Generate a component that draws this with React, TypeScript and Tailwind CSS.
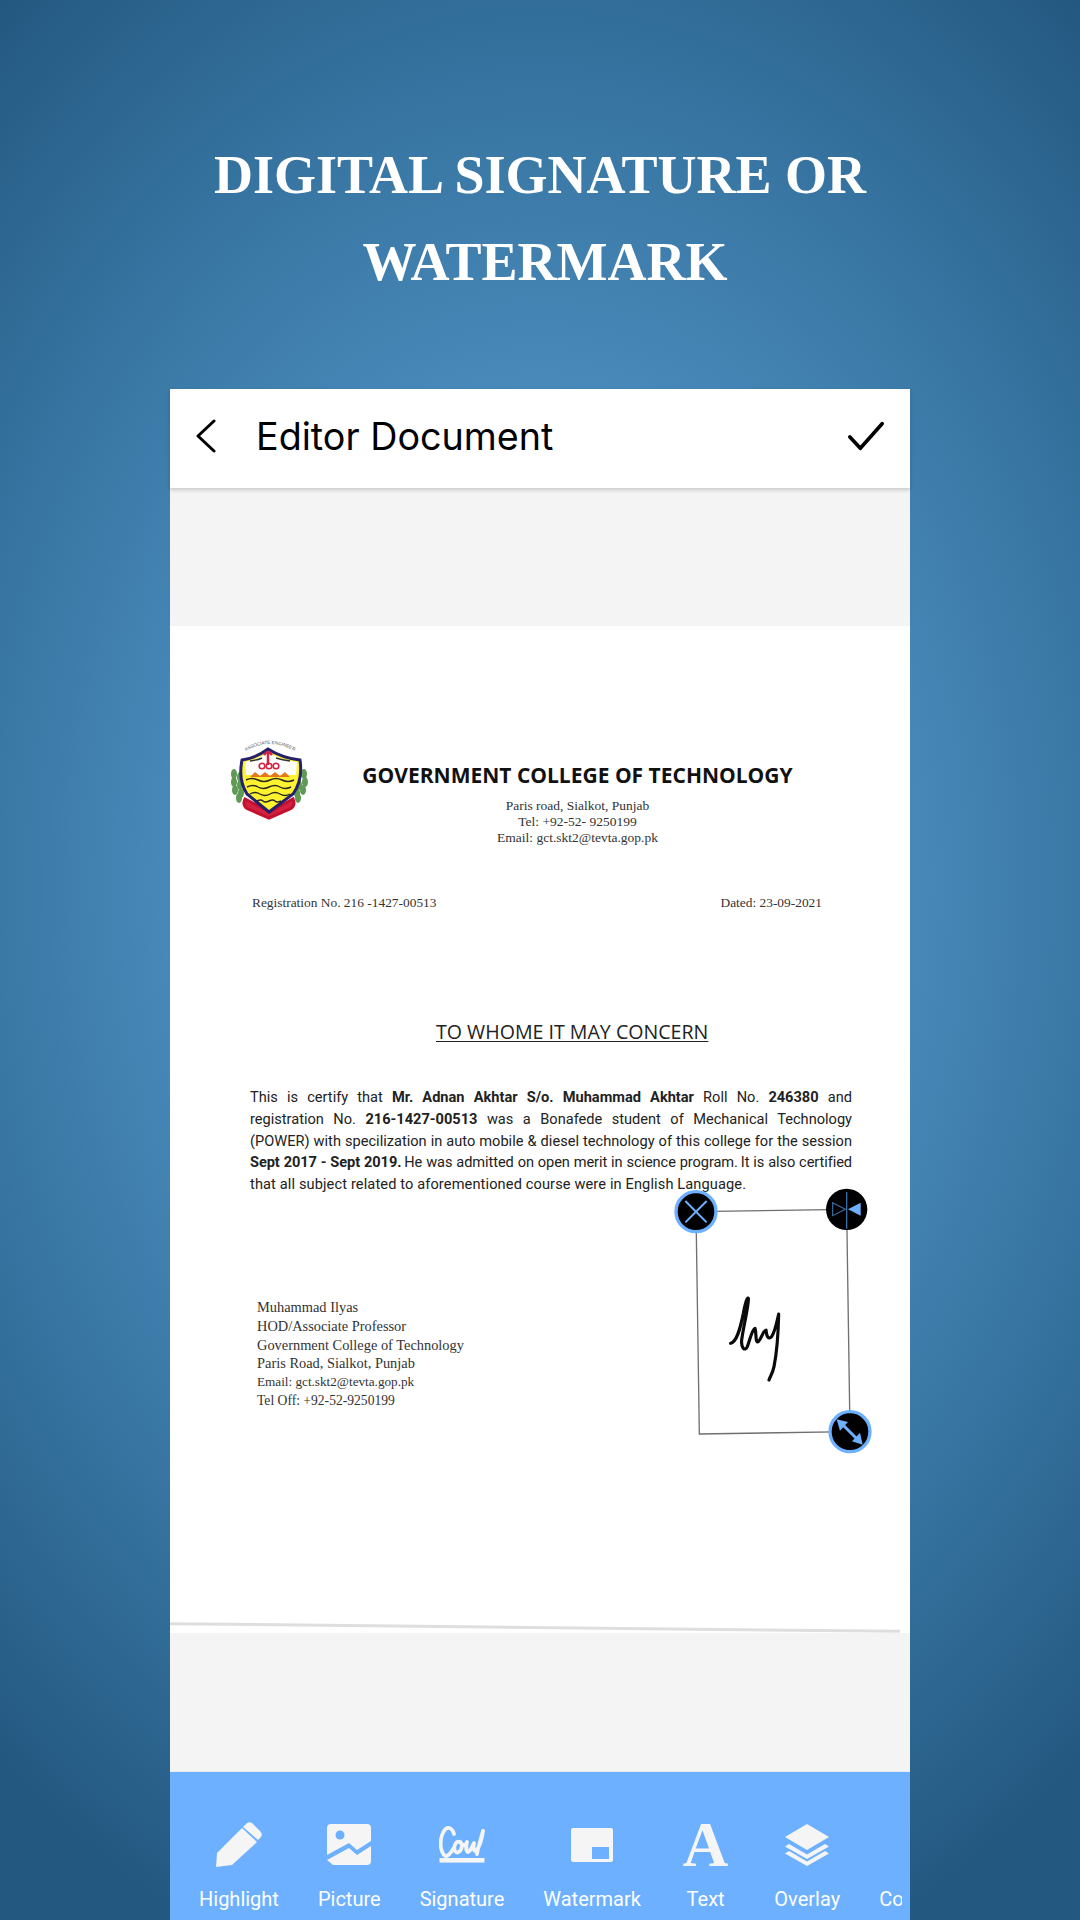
import React from 'react';

const serif = "font-['Liberation_Serif',serif]";
const roboto = "font-['Roboto',sans-serif]";

const PencilIcon = () => (
  <svg width="46" height="46" viewBox="0 0 46 46" fill="#f5f5f5">
    <path d="M0 45 L1 31 L26 6 L41 20 L16 43 Z" />
    <path d="M29 3 Q32 -1 36 1 L44 9 Q47 12 45 15 L42 18 L27 5 Z" />
  </svg>
);

const PictureIcon = () => (
  <svg width="46" height="42" viewBox="0 0 46 42" fill="#f5f5f5">
    <path d="M5 0 H41 Q45 0 45 4 V17 L31 26 L23 19 L1 31 V4 Q1 0 5 0 Z" />
    <path d="M1 36 L23 24 L31 31 L45 22 V37 Q45 41 41 41 H7 Z" />
    <circle cx="14" cy="11" r="4.5" fill="#6cb0ff" />
  </svg>
);

const SignatureIcon = () => (
  <svg width="46" height="40" viewBox="0 0 46 40" fill="none" stroke="#f5f5f5" strokeWidth="3.8" strokeLinecap="round" strokeLinejoin="round">
    <path d="M15 9 C13 2 8 1 5 6 C1 12 0 24 5 30 C8 33 12 28 14 24" />
    <path d="M21 17 C17 15 14 22 16 26 C18 29 22 27 23 21 C23 19 22 17 21 17 C24 21 26 21 28 17 C27 21 27 26 29 27 C32 26 33 21 35 18 C34 23 35 27 37 26 C41 22 43 13 44 6 C42 14 39 22 38 29" />
    <rect x="0.5" y="33" width="45" height="4.6" fill="#f5f5f5" stroke="none" />
  </svg>
);

const WatermarkIcon = () => (
  <svg width="42" height="34" viewBox="0 0 42 34" fill="#f5f5f5">
    <path fillRule="evenodd" d="M2 0 H40 Q42 0 42 2 V32 Q42 34 40 34 H2 Q0 34 0 32 V2 Q0 0 2 0 Z M21 19 V31 H38 V19 Z" />
  </svg>
);

const OverlayIcon = () => (
  <svg width="46" height="42" viewBox="0 0 46 42" fill="#f5f5f5">
    <path d="M23 0 L45 13 L23 26 L1 13 Z" />
    <path d="M5 20 L23 30.5 L41 20 L45 22.5 L23 35 L1 22.5 Z" />
    <path d="M5 27 L23 37.5 L41 27 L45 29.5 L23 42 L1 29.5 Z" />
  </svg>
);

const tools = [
  { label: 'Highlight', icon: <PencilIcon /> },
  { label: 'Picture', icon: <PictureIcon /> },
  { label: 'Signature', icon: <SignatureIcon /> },
  { label: 'Watermark', icon: <WatermarkIcon /> },
  { label: 'Text', icon: <span className={`${serif} text-[63px] font-bold leading-[46px] text-[#f5f5f5]`}>A</span>, extra: 'pl-[3px] pr-[7px]' },
  { label: 'Overlay', icon: <OverlayIcon /> },
  { label: 'Color', icon: null },
];

const CollegeCrest = () => (
  <svg width="100" height="100" viewBox="0 0 100 100" className="-ml-[11px] -mt-[10px] shrink-0">
    <path id="crest-arc" d="M24 22 Q50 6 76 22" fill="none" />
    <text fontSize="4.6" fill="#555" fontFamily="Liberation Sans, sans-serif" textAnchor="middle">
      <textPath href="#crest-arc" startOffset="50%">ASSOCIATE ENGINEER</textPath>
    </text>
    <g fill="#5f9a55">
      <ellipse cx="14" cy="44" rx="3" ry="5" />
      <ellipse cx="20" cy="47" rx="3" ry="5" />
      <ellipse cx="14" cy="52" rx="3" ry="5" />
      <ellipse cx="20" cy="55" rx="3" ry="5" />
      <ellipse cx="15" cy="60" rx="3" ry="5" />
      <ellipse cx="21" cy="63" rx="3" ry="5" />
      <ellipse cx="19" cy="68" rx="3" ry="5" />
      <ellipse cx="84" cy="44" rx="3" ry="5" />
      <ellipse cx="78" cy="47" rx="3" ry="5" />
      <ellipse cx="85" cy="52" rx="3" ry="5" />
      <ellipse cx="79" cy="55" rx="3" ry="5" />
      <ellipse cx="83" cy="60" rx="3" ry="5" />
      <ellipse cx="77" cy="63" rx="3" ry="5" />
      <ellipse cx="78" cy="68" rx="3" ry="5" />
    </g>
    <path d="M25 69 Q22 76 28 79 L49 88 L70 79 Q76 76 73 69 L50 82 Z" fill="#d3213f" stroke="#c4112f" strokeWidth="3" />
    <path d="M48 19 Q62 28 80 30 Q83 50 73 64 L49 82 L27 64 Q18 50 22 30 Q36 28 48 19 Z" fill="#fff22f" stroke="#25206b" strokeWidth="3" />
    <path d="M25 32 Q38 30 48 22 Q60 30 77 32 L76 45 L26 45 Z" fill="#fff" />
    <path d="M48 21 v14 M44 25 q4 -6 8 0" stroke="#d3213f" strokeWidth="2.5" fill="none" />
    <path d="M30 31 q8 -1 12 -3 M56 28 q6 2 14 3" stroke="#333" strokeWidth="1.4" fill="none" />
    <g fill="none" stroke="#d3213f" strokeWidth="1.6">
      <circle cx="42" cy="36" r="2.8" />
      <circle cx="49" cy="36" r="2.8" />
      <circle cx="56" cy="36" r="2.8" />
    </g>
    <path d="M30 47 l5 -5 l5 4 l5 -4 l5 4 l5 -4 l5 4 l5 -4 l5 5 Z" fill="#e8761f" />
    <g fill="none" stroke="#2a2a2a" strokeWidth="1.4">
      <path d="M26 50 q6 -3 12 0 t12 0 t12 0 t12 0" />
      <path d="M27 57 q6 -3 11 0 t11 0 t11 0 t11 0" />
      <path d="M30 64 q5 -3 10 0 t10 0 t10 0 t10 0" />
      <path d="M37 71 q4 -2 6 0 t6 0 t6 0 t6 0" />
    </g>
  </svg>
);

// signature frame, handles and ink, drawn in 3x units over the 230x300 crop
const SignatureOverlay = () => (
  <svg width="230" height="300" viewBox="0 0 690 900" className="absolute left-[490px] top-[544px]">
    <path d="M108 125 L560 118 L570 785 L118 792 Z" fill="none" stroke="#6f6f6f" strokeWidth="4" />
    <path
      d="M212 520 C230 515 240 480 250 430 C255 400 262 380 265 385 C268 400 250 470 245 510 C243 535 255 545 262 530 C270 510 275 480 285 475 C290 490 285 520 295 515 C305 505 310 480 318 480 C320 500 325 510 335 500 C345 485 352 450 356 432 C355 480 350 550 342 590 C338 610 330 620 327 630"
      fill="none"
      stroke="#0a0a0a"
      strokeWidth="9.5"
      strokeLinecap="round"
      strokeLinejoin="round"
    />
    <circle cx="108" cy="125" r="60" fill="#000" stroke="#6cb0ff" strokeWidth="10" />
    <path d="M76 93 L140 157 M140 93 L76 157" stroke="#6cb0ff" strokeWidth="6" />
    <circle cx="560" cy="118" r="62" fill="#000" />
    <path d="M560 66 V176" stroke="#3b6ea5" strokeWidth="4" />
    <path d="M518 98 L556 118 L518 137 Z" fill="none" stroke="#3b6ea5" strokeWidth="3.5" />
    <path d="M602 98 L564 118 L602 137 Z" fill="#6cb0ff" />
    <circle cx="570" cy="785" r="60" fill="#000" stroke="#6cb0ff" strokeWidth="10" />
    <path d="M546 762 L594 810" stroke="#6cb0ff" strokeWidth="9" />
    <path d="M530 748 L564 756 L540 782 Z M608 824 L576 814 L600 788 Z" fill="#6cb0ff" />
  </svg>
);

const Line = ({ children }: { children: React.ReactNode }) => (
  <p className="[text-align:justify] [text-align-last:justify] whitespace-nowrap">{children}</p>
);

export default function App() {
  return (
    <div className="w-[1080px] h-[1920px] overflow-hidden bg-[radial-gradient(ellipse_78%_60%_at_50%_46%,#5196c9_0%,#4a8cbd_40%,#336f9b_75%,#235880_100%)]">
      <h1 className={`${serif} pt-[132px] h-[389px] text-center text-[54px] leading-[87px] font-bold text-white`}>
        DIGITAL SIGNATURE OR
        <span className="block pl-[10px]">WATERMARK</span>
      </h1>

      <div className="ml-[170px] w-[740px] h-[1531px] flex flex-col bg-[#f4f4f4]">
        <header className="h-[99px] pb-[4px] flex items-center justify-between bg-white shadow-[0_2px_4px_rgba(0,0,0,0.18)] z-10">
          <div className="flex items-center">
            <svg width="22" height="34" viewBox="0 0 22 34" fill="none" stroke="#000" strokeWidth="3" strokeLinecap="round" strokeLinejoin="round" className="ml-[25px]">
              <path d="M19 2 L3 17 L19 32" />
            </svg>
            <span className="ml-[39px] font-['Inter',sans-serif] text-[37.7px] text-black">Editor Document</span>
          </div>
          <svg width="36" height="30" viewBox="0 0 38 30" fill="none" stroke="#000" strokeWidth="3.8" strokeLinecap="round" strokeLinejoin="round" className="mr-[26px] mb-[2px]">
            <path d="M2 16 L13 28 L36 2" />
          </svg>
        </header>

        <div className="h-[138px]" />

        <main className="relative h-[1007px] bg-white pt-[114px] text-[#222]">
          <div className="flex ml-[61px]">
            <div className="w-[76px] h-[83px]">
              <CollegeCrest />
            </div>
            <div className="ml-[55px] w-[431px] mt-[22px] text-center">
              <div className="font-['Open_Sans',sans-serif] text-[21px] leading-[26px] font-bold text-[#111] whitespace-nowrap">
                GOVERNMENT COLLEGE OF TECHNOLOGY
              </div>
              <div className={`${serif} mt-[10px] text-[13.5px] leading-[16px] text-[#333]`}>
                <p>Paris road, Sialkot, Punjab</p>
                <p>Tel: +92-52- 9250199</p>
                <p>Email: gct.skt2@tevta.gop.pk</p>
              </div>
            </div>
          </div>

          <div className={`${serif} mt-[49px] ml-[82px] w-[570px] flex justify-between text-[13.4px] leading-[16px] text-[#333]`}>
            <span>Registration No. 216 -1427-00513</span>
            <span>Dated: 23-09-2021</span>
          </div>

          <h2 className="mt-[107px] ml-[266px] font-['Open_Sans',sans-serif] text-[19.6px] leading-[28px] text-[#222] underline underline-offset-2 whitespace-nowrap">
            TO WHOME IT MAY CONCERN
          </h2>

          <div className={`${roboto} mt-[41px] ml-[80px] w-[602px] text-[14.6px] leading-[21.8px] text-[#222]`}>
            <Line>
              This is certify that <b>Mr. Adnan Akhtar S/o. Muhammad Akhtar</b> Roll No. <b>246380</b> and
            </Line>
            <Line>
              registration No. <b>216-1427-00513</b> was a Bonafede student of Mechanical Technology
            </Line>
            <Line>(POWER) with specilization in auto mobile &amp; diesel technology of this college for the session</Line>
            <p className="[text-align:justify] [text-align-last:justify] whitespace-nowrap tracking-[-0.08px]">
              <b>Sept 2017 - Sept 2019.</b>{'\u2009'}He was admitted on open merit in science program.{'\u2009'}It is also certified
            </p>
            <p className="tracking-[0.12px]">that all subject related to aforementioned course were in English Language.</p>
          </div>

          <div className={`${serif} mt-[102px] ml-[87px] text-[14.4px] leading-[18.8px] text-[#333]`}>
            <p>Muhammad Ilyas</p>
            <p>HOD/Associate Professor</p>
            <p>Government College of Technology</p>
            <p>Paris Road, Sialkot, Punjab</p>
            <p className="text-[13.2px]">Email: gct.skt2@tevta.gop.pk</p>
            <p className="text-[13.6px]">Tel Off: +92-52-9250199</p>
          </div>

          <SignatureOverlay />
          <div className="absolute left-0 top-[1000px] w-[730px] h-[3px] bg-[#dedede] rotate-[0.6deg]" />
        </main>

        <div className="h-[138px]" />

        <nav className="h-[149px] border-t border-[#e8eef5] bg-[#6cb0ff] overflow-hidden">
          <div className="w-[732px] h-full overflow-hidden flex gap-[39px] pl-[29px]">
            {tools.map((tool) => (
              <div key={tool.label} className={`flex flex-col items-center shrink-0 ${tool.extra ?? ''}`}>
                <div className="h-[46px] mt-[50px] flex items-center justify-center">{tool.icon}</div>
                <span className={`${roboto} mt-[19px] text-[20px] leading-[24px] text-white`}>{tool.label}</span>
              </div>
            ))}
          </div>
        </nav>
      </div>
    </div>
  );
}
